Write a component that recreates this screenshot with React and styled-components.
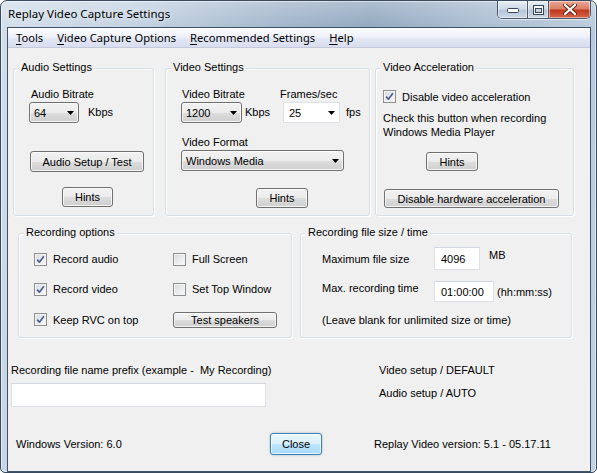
import React from 'react';
import styled, { createGlobalStyle } from 'styled-components';

const GlobalStyle = createGlobalStyle`
  html, body { margin: 0; padding: 0; }
  body { width: 597px; height: 473px; overflow: hidden; background: #ffffff; }
  * { box-sizing: border-box; }
`;

const Window = styled.div`
  width: 597px;
  height: 473px;
  display: flex;
  flex-direction: column;
  border: 1px solid #3a4b60;
  border-radius: 7px 7px 5px 5px;
  background:
    linear-gradient(180deg, rgba(255,255,255,0.28) 0px, rgba(255,255,255,0) 30px),
    linear-gradient(100deg, #d2deea 0%, #bfcfe0 22%, #9fb3c9 42%, #8fa6be 55%, #a9bcd1 72%, #c3d3e3 100%);
  box-shadow: inset 0 0 0 1px rgba(255,255,255,0.5);
  font-family: "Liberation Sans", Arial, sans-serif;
  font-size: 11px;
  color: #000;
`;

const TitleBar = styled.div`
  height: 26px;
  flex: none;
  display: flex;
  align-items: flex-start;
  justify-content: space-between;
  padding-left: 7px;
`;

const TitleText = styled.div`
  font-family: "Noto Sans", "Open Sans", sans-serif;
  font-size: 11.5px;
  line-height: 26px;
  color: #000;
  text-shadow: 0 0 6px rgba(255,255,255,0.9);
`;

const CaptionGroup = styled.div`
  display: flex;
  margin-right: 5px;
  border: 1px solid #4a596d;
  border-top: none;
  border-radius: 0 0 5px 5px;
  overflow: hidden;
  box-shadow: 0 1px 0 rgba(255,255,255,0.6);
`;

const CapBtn = styled.div`
  width: ${p => p.$w}px;
  height: 17px;
  display: flex;
  align-items: center;
  justify-content: center;
  background: ${p => p.$close
    ? 'linear-gradient(#e9a897 0%, #dc7f66 45%, #c3391f 55%, #d4664a 100%)'
    : 'linear-gradient(#e8eff6 0%, #d0dbe7 45%, #b5c6d8 55%, #cbd8e6 100%)'};
  box-shadow: inset 0 0 0 1px rgba(255,255,255,0.45);
  & + & { border-left: 1px solid #4a596d; }
`;

const Client = styled.div`
  flex: 1;
  margin: 0 5px 0 6px;
  border: 1px solid #3f5169;
  display: flex;
  flex-direction: column;
  background: #f0f0f0;
`;

const MenuBar = styled.div`
  height: 20px;
  flex: none;
  display: flex;
  align-items: center;
  padding-left: 1px;
  background: linear-gradient(#fbfcfe 0%, #eef1f9 45%, #e1e6f4 60%, #d8deef 100%);
  border-bottom: 1px solid #c4cad9;
  font-family: "Noto Sans", "Open Sans", sans-serif;
  font-size: 11.2px;
`;

const MenuItem = styled.span`
  padding: 0 7px;
  line-height: 19px;
  white-space: nowrap;
  & u { text-decoration: underline; text-underline-offset: 2px; }
`;

const Body = styled.div`
  flex: 1;
  display: flex;
  flex-direction: column;
  padding-top: 20px;
`;

const Row = styled.div`
  display: flex;
  align-items: flex-start;
  padding-left: ${p => p.$pl || 0}px;
  margin-top: ${p => p.$mt || 0}px;
`;

const Group = styled.div`
  position: relative;
  flex: none;
  width: ${p => p.$w}px;
  height: ${p => p.$h}px;
  margin-left: ${p => p.$ml || 0}px;
  border: 1px solid #d5dfe5;
  border-radius: 3px;
  box-shadow: inset 1px 1px 0 #ffffff, 1px 1px 0 #ffffff;
  display: flex;
  flex-direction: column;
  align-items: flex-start;
  padding-left: ${p => p.$pl || 0}px;
  padding-top: ${p => p.$pt || 0}px;
`;

const Legend = styled.span`
  position: absolute;
  top: -8px;
  left: 5px;
  padding: 0 2px;
  background: #f0f0f0;
  line-height: 13px;
  white-space: nowrap;
`;

const Label = styled.div`
  line-height: ${p => p.$lh || 13}px;
  white-space: nowrap;
  margin-top: ${p => p.$mt || 0}px;
  margin-left: ${p => p.$ml || 0}px;
  align-self: ${p => p.$self || 'auto'};
`;

const Line = styled.div`
  display: flex;
  align-items: center;
  margin-top: ${p => p.$mt || 0}px;
  margin-left: ${p => p.$ml || 0}px;
`;

const Col = styled.div`
  display: flex;
  flex-direction: column;
  align-items: flex-start;
  width: ${p => (p.$w ? p.$w + 'px' : 'auto')};
`;

const Button = styled.div`
  width: ${p => p.$w}px;
  height: ${p => p.$h || 21}px;
  margin-top: ${p => p.$mt || 0}px;
  margin-left: ${p => p.$ml || 0}px;
  display: flex;
  align-items: center;
  justify-content: center;
  white-space: nowrap;
  border: 1px solid ${p => (p.$default ? '#3c7fb1' : '#707070')};
  border-radius: 3px;
  background: ${p => p.$default
    ? 'linear-gradient(#eaf6fd 0%, #d9f0fc 50%, #bee6fd 51%, #a7d9f5 100%)'
    : 'linear-gradient(#f2f2f2 0%, #ebebeb 50%, #dddddd 51%, #cfcfcf 100%)'};
  box-shadow: inset 0 0 0 1px ${p => (p.$default ? 'rgba(255,255,255,0.7)' : 'rgba(252,252,252,0.85)')}${p => (p.$default ? ', 0 0 2px rgba(60,127,177,0.6)' : '')};
`;

const Combo = styled.div`
  width: ${p => p.$w}px;
  height: ${p => p.$h || 21}px;
  margin-top: ${p => p.$mt || 0}px;
  margin-left: ${p => p.$ml || 0}px;
  display: flex;
  align-items: center;
  justify-content: space-between;
  padding: 0 4px 0 ${p => (p.$editable ? 5 : 4)}px;
  border: 1px solid ${p => (p.$editable ? '#dde1e7' : '#707070')};
  border-radius: ${p => (p.$editable ? 1 : 3)}px;
  background: ${p => (p.$editable
    ? '#ffffff'
    : 'linear-gradient(#f2f2f2 0%, #ebebeb 50%, #dddddd 51%, #cfcfcf 100%)')};
  box-shadow: ${p => (p.$editable ? 'none' : 'inset 0 0 0 1px rgba(252,252,252,0.85)')};
`;

const TextBox = styled.div`
  width: ${p => p.$w}px;
  height: ${p => p.$h}px;
  margin-top: ${p => p.$mt || 0}px;
  display: flex;
  align-items: center;
  padding-left: 6px;
  background: #ffffff;
  border: 1px solid #dde1e7;
  border-top-color: #d2d6dd;
`;

const CheckBoxBox = styled.div`
  width: 13px;
  height: 13px;
  flex: none;
  border: 1px solid #8e8f8f;
  background: linear-gradient(135deg, #d6d9dc 0%, #eceef0 60%, #fbfbfb 100%);
  box-shadow: inset 0 0 0 1px #f4f4f4;
  display: flex;
  align-items: center;
  justify-content: center;
`;

const CheckRow = styled.div`
  display: flex;
  align-items: center;
  gap: 6px;
  margin-top: ${p => p.$mt || 0}px;
`;

const OptGrid = styled.div`
  display: grid;
  grid-template-columns: 139px 1fr;
  grid-template-rows: 30px 30px 31px;
  align-items: center;
  padding: 10px 0 0 15px;
  width: 100%;
`;

const SizeRow = styled.div`
  display: flex;
  align-items: ${p => p.$align || 'center'};
  margin-top: ${p => p.$mt || 0}px;
`;

const SizeLabel = styled.div`
  width: 112px;
  line-height: 14px;
  white-space: nowrap;
  align-self: ${p => p.$self || 'auto'};
`;

const Unit = styled.div`
  margin-left: ${p => p.$ml}px;
  line-height: 14px;
  white-space: nowrap;
  align-self: ${p => p.$self || 'auto'};
  margin-top: ${p => p.$mt || 0}px;
`;

const Bottom = styled.div`
  display: grid;
  grid-template-columns: 368px 1fr;
  margin-top: 25px;
  padding-left: 3px;
`;

const Footer = styled.div`
  display: grid;
  grid-template-columns: 254px 104px 1fr;
  align-items: center;
  margin-top: 26px;
  padding-left: 8px;
`;

const Arrow = () => (
  <svg width="7" height="4" viewBox="0 0 7 4" aria-hidden="true">
    <path d="M0 0H7L3.5 4Z" fill="#000" />
  </svg>
);

const CheckBox = ({ checked }) => (
  <CheckBoxBox>
    {checked && (
      <svg width="9" height="9" viewBox="0 0 9 9" aria-hidden="true">
        <path d="M1.2 4.6 L3.4 7.2 L7.9 1.2" stroke="#4b5f93" strokeWidth="1.7" fill="none" strokeLinejoin="round" />
      </svg>
    )}
  </CheckBoxBox>
);

const Check = ({ checked, children }) => (
  <CheckRow>
    <CheckBox checked={checked} />
    <span>{children}</span>
  </CheckRow>
);

export default function App() {
  return (
    <>
      <GlobalStyle />
      <Window>
        <TitleBar>
          <TitleText>Replay Video Capture Settings</TitleText>
          <CaptionGroup>
            <CapBtn $w={29}>
              <svg width="12" height="6" viewBox="0 0 12 6" aria-hidden="true">
                <rect x="0.5" y="1.5" width="11" height="4" rx="1" fill="#ffffff" stroke="#35465c" />
              </svg>
            </CapBtn>
            <CapBtn $w={21}>
              <svg width="11" height="10" viewBox="0 0 11 10" aria-hidden="true">
                <rect x="0.5" y="0.5" width="10" height="9" fill="#ffffff" stroke="#35465c" />
                <rect x="2.5" y="3.5" width="6" height="4" fill="#c6d3e0" stroke="#35465c" />
              </svg>
            </CapBtn>
            <CapBtn $w={42} $close>
              <svg width="14" height="11" viewBox="0 0 14 11" aria-hidden="true">
                <path d="M2 1 L12 10 M12 1 L2 10" stroke="#5a2214" strokeWidth="4" strokeLinecap="round" />
                <path d="M2 1 L12 10 M12 1 L2 10" stroke="#ffffff" strokeWidth="2.2" strokeLinecap="round" />
              </svg>
            </CapBtn>
          </CaptionGroup>
        </TitleBar>
        <Client>
          <MenuBar>
            <MenuItem><u>T</u>ools</MenuItem>
            <MenuItem><u>V</u>ideo Capture Options</MenuItem>
            <MenuItem><u>R</u>ecommended Settings</MenuItem>
            <MenuItem><u>H</u>elp</MenuItem>
          </MenuBar>
          <Body>
            <Row $pl={5}>
              <Group $w={141} $h={148} $pl={17} $pt={19}>
                <Legend>Audio Settings</Legend>
                <Label>Audio Bitrate</Label>
                <Line $mt={1} $ml={-2}>
                  <Combo $w={50}>64<Arrow /></Combo>
                  <Label $ml={9}>Kbps</Label>
                </Line>
                <Button $w={114} $h={21} $mt={28} $ml={-1}>Audio Setup / Test</Button>
                <Button $w={51} $h={20} $mt={15} $ml={31}>Hints</Button>
              </Group>
              <Group $w={205} $h={148} $ml={11} $pl={15} $pt={19}>
                <Legend>Video Settings</Legend>
                <Line>
                  <Col $w={99}>
                    <Label $ml={1}>Video Bitrate</Label>
                    <Line $mt={1}>
                      <Combo $w={61}>1200<Arrow /></Combo>
                      <Label $ml={3}>Kbps</Label>
                    </Line>
                  </Col>
                  <Col>
                    <Label>Frames/sec</Label>
                    <Line $mt={1} $ml={3}>
                      <Combo $w={57} $editable>25<Arrow /></Combo>
                      <Label $ml={6}>fps</Label>
                    </Line>
                  </Col>
                </Line>
                <Label $mt={13} $ml={1}>Video Format</Label>
                <Combo $w={163} $mt={1}>Windows Media<Arrow /></Combo>
                <Button $w={52} $h={20} $mt={17} $ml={75}>Hints</Button>
              </Group>
              <Group $w={199} $h={148} $ml={5} $pl={7} $pt={21}>
                <Legend>Video Acceleration</Legend>
                <Check checked>Disable video acceleration</Check>
                <Label $lh={14} $mt={8}>Check this button when recording<br />Windows Media Player</Label>
                <Button $w={52} $h={19} $mt={13} $ml={43}>Hints</Button>
                <Button $w={175} $h={19} $mt={18} $ml={1}>Disable hardware acceleration</Button>
              </Group>
            </Row>
            <Row $pl={10} $mt={17}>
              <Group $w={274} $h={105}>
                <Legend>Recording options</Legend>
                <OptGrid>
                  <Check checked>Record audio</Check>
                  <Check>Full Screen</Check>
                  <Check checked>Record video</Check>
                  <Check>Set Top Window</Check>
                  <Check checked>Keep RVC on top</Check>
                  <Button $w={104} $h={16}>Test speakers</Button>
                </OptGrid>
              </Group>
              <Group $w={272} $h={105} $ml={8} $pl={21} $pt={13}>
                <Legend>Recording file size / time</Legend>
                <SizeRow>
                  <SizeLabel>Maximum file size</SizeLabel>
                  <TextBox $w={46} $h={23}>4096</TextBox>
                  <Unit $ml={9} $self="flex-start" $mt={1}>MB</Unit>
                </SizeRow>
                <SizeRow $mt={11}>
                  <SizeLabel $self="flex-start">Max. recording time</SizeLabel>
                  <TextBox $w={60} $h={21}>01:00:00</TextBox>
                  <Unit $ml={3}>(hh:mm:ss)</Unit>
                </SizeRow>
                <Label $lh={14} $mt={11}>(Leave blank for unlimited size or time)</Label>
              </Group>
            </Row>
            <Bottom>
              <Col>
                <Label $lh={14}>Recording file name prefix (example -&nbsp; My Recording)</Label>
                <TextBox $w={255} $h={24} $mt={6} />
              </Col>
              <Col>
                <Label $lh={14}>Video setup / DEFAULT</Label>
                <Label $lh={14} $mt={9}>Audio setup / AUTO</Label>
              </Col>
            </Bottom>
            <Footer>
              <Label $lh={14}>Windows Version: 6.0</Label>
              <Button $w={52} $h={22} $default>Close</Button>
              <Label $lh={14}>Replay Video version: 5.1 - 05.17.11</Label>
            </Footer>
          </Body>
        </Client>
      </Window>
    </>
  );
}
